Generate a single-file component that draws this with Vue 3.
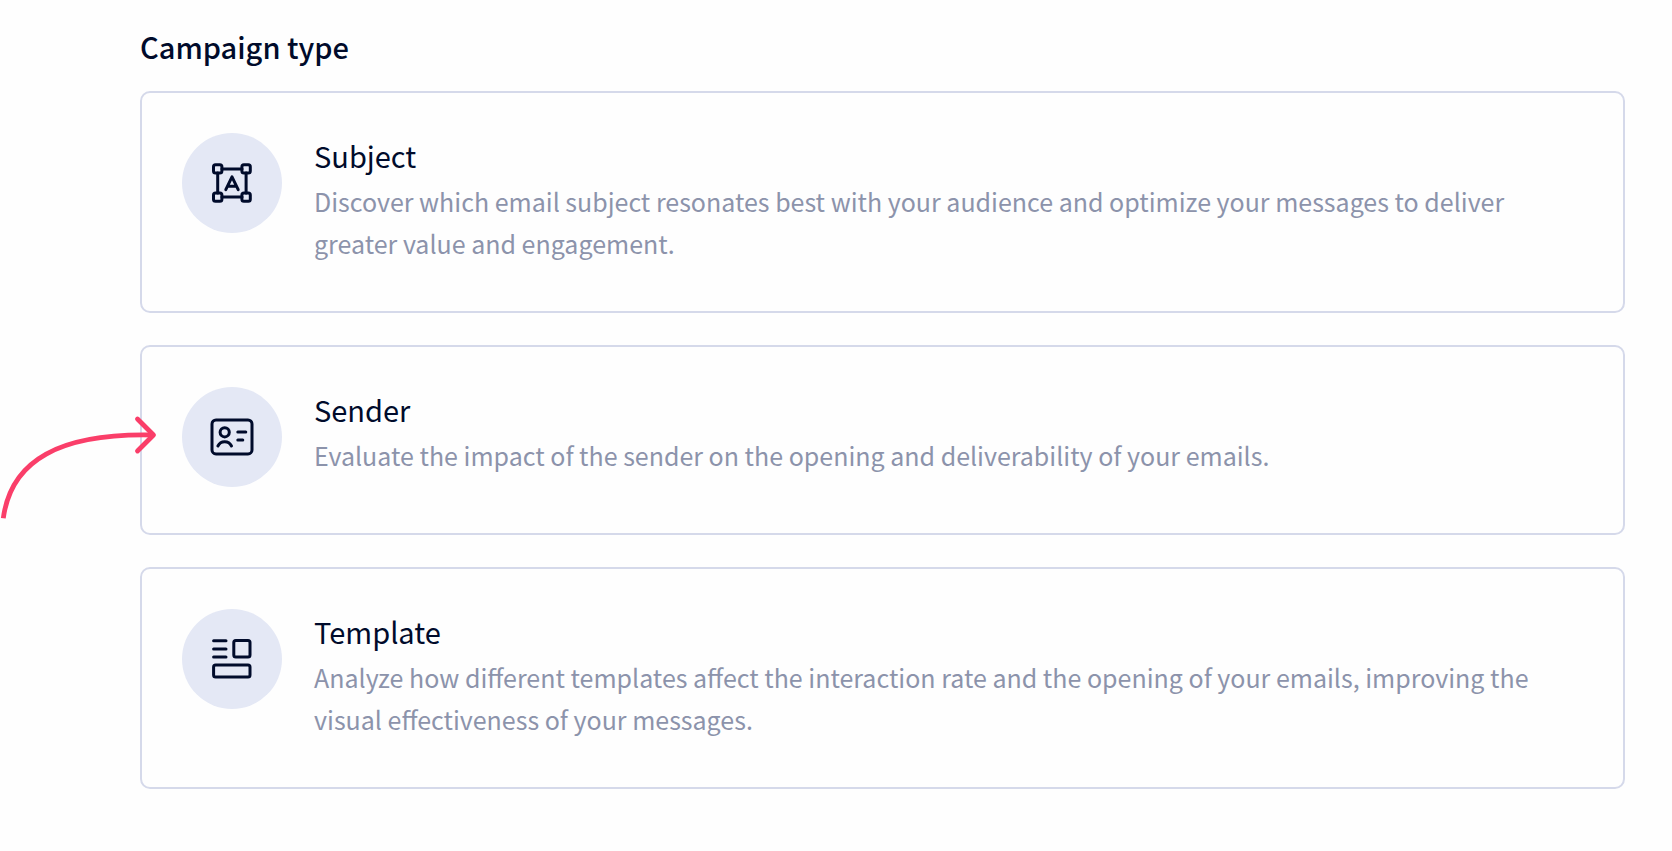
<script setup>
const types = [
  {
    id: 'subject',
    title: 'Subject',
    text: 'Discover which email subject resonates best with your audience and optimize your messages to deliver greater value and engagement.',
  },
  {
    id: 'sender',
    title: 'Sender',
    text: 'Evaluate the impact of the sender on the opening and deliverability of your emails.',
  },
  {
    id: 'template',
    title: 'Template',
    text: 'Analyze how different templates affect the interaction rate and the opening of your emails, improving the visual effectiveness of your messages.',
  },
]
</script>

<template>
  <main class="page">
    <h1 class="heading">Campaign type</h1>
    <div class="list">
      <div v-for="type in types" :key="type.id" class="item">
        <button type="button" class="card">
          <span class="badge">
            <svg v-if="type.id === 'subject'" class="icon" viewBox="0 0 24 24" aria-hidden="true">
              <rect x="2.75" y="2.85" width="4.2" height="4.2" rx="1" />
              <rect x="16.95" y="2.85" width="4.2" height="4.2" rx="1" />
              <rect x="2.75" y="16.95" width="4.2" height="4.2" rx="1" />
              <rect x="16.95" y="16.95" width="4.2" height="4.2" rx="1" />
              <path d="M7 4.95h10M7 19.05h10M4.85 7v10M19.05 7v10" />
              <path d="M8.9 15.3 12 8.9l3.1 6.4M9.8 13.6h4.4" />
            </svg>
            <svg v-else-if="type.id === 'sender'" class="icon" viewBox="0 0 24 24" aria-hidden="true">
              <rect x="2" y="3.45" width="20" height="17" rx="2" />
              <circle cx="8.35" cy="9.65" r="2.3" />
              <path d="M4.95 16.5c.7-1.45 1.9-2.15 3.4-2.15s2.7.7 3.4 2.15M14.9 9.5h4M14.9 13.5h2.5" />
            </svg>
            <svg v-else class="icon" viewBox="0 0 24 24" aria-hidden="true">
              <path d="M2.8 2.9h6.2M2.8 7h6.2M2.8 11h6.2" />
              <rect x="12.9" y="2.8" width="8.1" height="8.2" rx="1" />
              <rect x="2.8" y="15" width="18.2" height="6" rx="1" />
            </svg>
          </span>
          <span class="body">
            <span class="title">{{ type.title }}</span>
            <span class="text">{{ type.text }}</span>
          </span>
        </button>
        <svg v-if="type.id === 'sender'" class="arrow" viewBox="0 0 160 115" aria-hidden="true">
          <path d="M3.3 108.3C11 50 60 23 153 25" />
          <path d="M137.5 9l16 16-16 16" stroke-linecap="round" stroke-linejoin="round" />
        </svg>
      </div>
    </div>
  </main>
</template>

<style>
body {
  margin: 0;
  background: #fefefe;
}
</style>

<style scoped>
.page {
  padding: 24px 47px 48px 140px;
  font-family: "Noto Sans CJK SC", "Noto Sans", sans-serif;
  color: #000b2b;
}

.heading {
  margin: 0 0 23px;
  font-size: 29px;
  line-height: 44px;
  font-weight: 500;
}

.list {
  display: flex;
  flex-direction: column;
  gap: 32px;
}

.item {
  position: relative;
}

.card {
  display: flex;
  align-items: flex-start;
  gap: 32px;
  box-sizing: border-box;
  width: 100%;
  min-height: 190px;
  padding: 40px;
  border: 2px solid #d5d9ea;
  border-radius: 10px;
  background: #fefefe;
  color: inherit;
  font: inherit;
  text-align: left;
  cursor: pointer;
}

.badge {
  display: flex;
  flex: none;
  align-items: center;
  justify-content: center;
  width: 100px;
  height: 100px;
  border-radius: 50%;
  background: #e4e8f5;
}

.icon {
  width: 48px;
  height: 48px;
  fill: none;
  stroke: #000b2b;
  stroke-width: 1.5;
  stroke-linecap: round;
  stroke-linejoin: round;
}

.body {
  display: flex;
  flex: 1;
  flex-direction: column;
  gap: 3px;
  padding-bottom: 7px;
}

.title {
  font-size: 29px;
  line-height: 44px;
}

.text {
  font-size: 25px;
  line-height: 42px;
  color: #8c93ab;
}

.arrow {
  position: absolute;
  top: 65px;
  left: -140px;
  width: 160px;
  height: 115px;
  fill: none;
  stroke: #fa3e69;
  stroke-width: 4.8;
  pointer-events: none;
}
</style>
